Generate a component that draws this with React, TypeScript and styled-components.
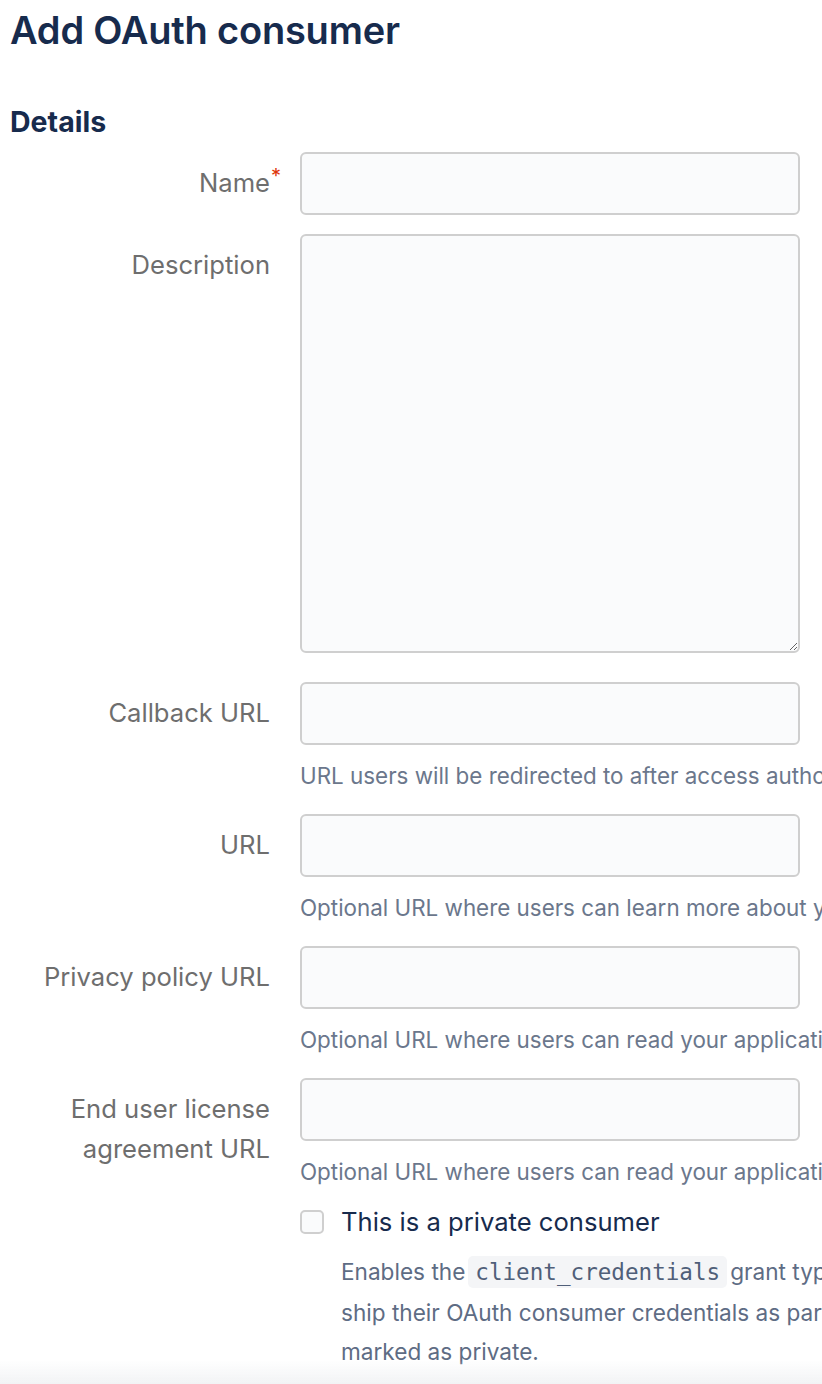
import React from 'react';
import styled, { createGlobalStyle } from 'styled-components';

const GlobalStyle = createGlobalStyle`
    html, body {
        margin: 0;
        padding: 0;
        background: #ffffff;
        overflow: hidden;
    }
    body {
        font-family: Inter, "Noto Sans", "Liberation Sans", sans-serif;
    }
`;

const Page = styled.div`
    padding-left: 10px;
    height: 1384px;
    box-sizing: border-box;
`;

const Title = styled.h1`
    margin: 0;
    font-size: 38px;
    line-height: 60px;
    font-weight: 600;
    color: #172b4d;
    letter-spacing: -0.2px;
`;

const SectionTitle = styled.h2`
    margin: 42px 0 10px;
    font-size: 28.5px;
    line-height: 40px;
    font-weight: 700;
    color: #172b4d;
`;

const Row = styled.div<{ $gap?: number }>`
    display: grid;
    grid-template-columns: 260px 500px;
    column-gap: 30px;
    margin-bottom: ${(p) => (p.$gap ?? 20)}px;
`;

const Label = styled.label<{ $required?: boolean }>`
    position: relative;
    justify-self: end;
    text-align: right;
    padding-top: 11px;
    font-size: 25.6px;
    line-height: 40px;
    color: #6e6e6e;
    white-space: nowrap;

    ${(p) => p.$required && `
        &::after {
            content: '*';
            position: absolute;
            right: -11px;
            top: 4px;
            font-size: 20px;
            color: #de350b;
        }
    `}
`;

const Control = styled.div`
    display: flex;
    flex-direction: column;
    min-width: 0;
`;

const Input = styled.input`
    box-sizing: border-box;
    width: 500px;
    height: 63px;
    border: 2px solid #cfcfcf;
    border-radius: 6px;
    background: #fafbfc;
    font-size: 22px;
    padding: 0 14px;
    outline: none;
`;

const TextArea = styled.textarea`
    box-sizing: border-box;
    display: block;
    width: 500px;
    height: 419px;
    border: 2px solid #cfcfcf;
    border-radius: 6px;
    background: #fafbfc;
    font-size: 22px;
    padding: 12px 14px;
    outline: none;
    resize: vertical;
`;

const Help = styled.div`
    margin-top: 13px;
    font-size: 22.4px;
    line-height: 36px;
    color: #6b778c;
    white-space: nowrap;
`;

const CheckRow = styled.div`
    display: flex;
    align-items: center;
    gap: 17px;
    height: 40px;
`;

const CheckBox = styled.span`
    box-sizing: border-box;
    width: 24px;
    height: 24px;
    border: 2px solid #cfcfcf;
    border-radius: 5px;
    background: #fafbfc;
    flex: none;
`;

const CheckLabel = styled.span`
    font-size: 25.6px;
    line-height: 40px;
    color: #172b4d;
`;

const CheckDescription = styled.p`
    margin: 10px 0 0 41px;
    font-size: 22.6px;
    line-height: 39.5px;
    color: #5e6c84;
    white-space: nowrap;
`;

const Code = styled.code`
    font-family: "DejaVu Sans Mono", "Liberation Mono", monospace;
    font-size: 22.6px;
    background: #f4f5f7;
    color: #505f79;
    border-radius: 5px;
    padding: 3px 7px;
    margin: 0 3px;
`;

const BottomFade = styled.div`
    position: fixed;
    left: 0;
    right: 0;
    bottom: 0;
    height: 24px;
    background: linear-gradient(rgba(244, 245, 247, 0), #f2f3f5);
    pointer-events: none;
`;

const fields = [
    { label: 'Callback URL', help: 'URL users will be redirected to after access authorization' },
    { label: 'URL', help: 'Optional URL where users can learn more about your application' },
    { label: 'Privacy policy URL', help: "Optional URL where users can read your application's privacy policy" },
    { label: <>End user license<br />agreement URL</>, help: "Optional URL where users can read your application's end user license agreement" },
];

const App = () => {
    return (
        <Page>
            <GlobalStyle />
            <Title>Add OAuth consumer</Title>
            <SectionTitle>Details</SectionTitle>

            <Row $gap={19}>
                <Label $required>Name</Label>
                <Control><Input /></Control>
            </Row>

            <Row $gap={29}>
                <Label>Description</Label>
                <Control><TextArea /></Control>
            </Row>

            {fields.map((f, i) => (
                <Row key={i} $gap={i === fields.length - 1 ? 12 : 20}>
                    <Label>{f.label}</Label>
                    <Control>
                        <Input />
                        <Help>{f.help}</Help>
                    </Control>
                </Row>
            ))}

            <Row>
                <span />
                <Control>
                    <CheckRow>
                        <CheckBox />
                        <CheckLabel>This is a private consumer</CheckLabel>
                    </CheckRow>
                    <CheckDescription>
                        Enables the<Code>client_credentials</Code>grant type for this consumer. Apps that<br />
                        ship their OAuth consumer credentials as part of a public client should not be<br />
                        marked as private.
                    </CheckDescription>
                </Control>
            </Row>
            <BottomFade />
        </Page>
    );
};

export default App;
